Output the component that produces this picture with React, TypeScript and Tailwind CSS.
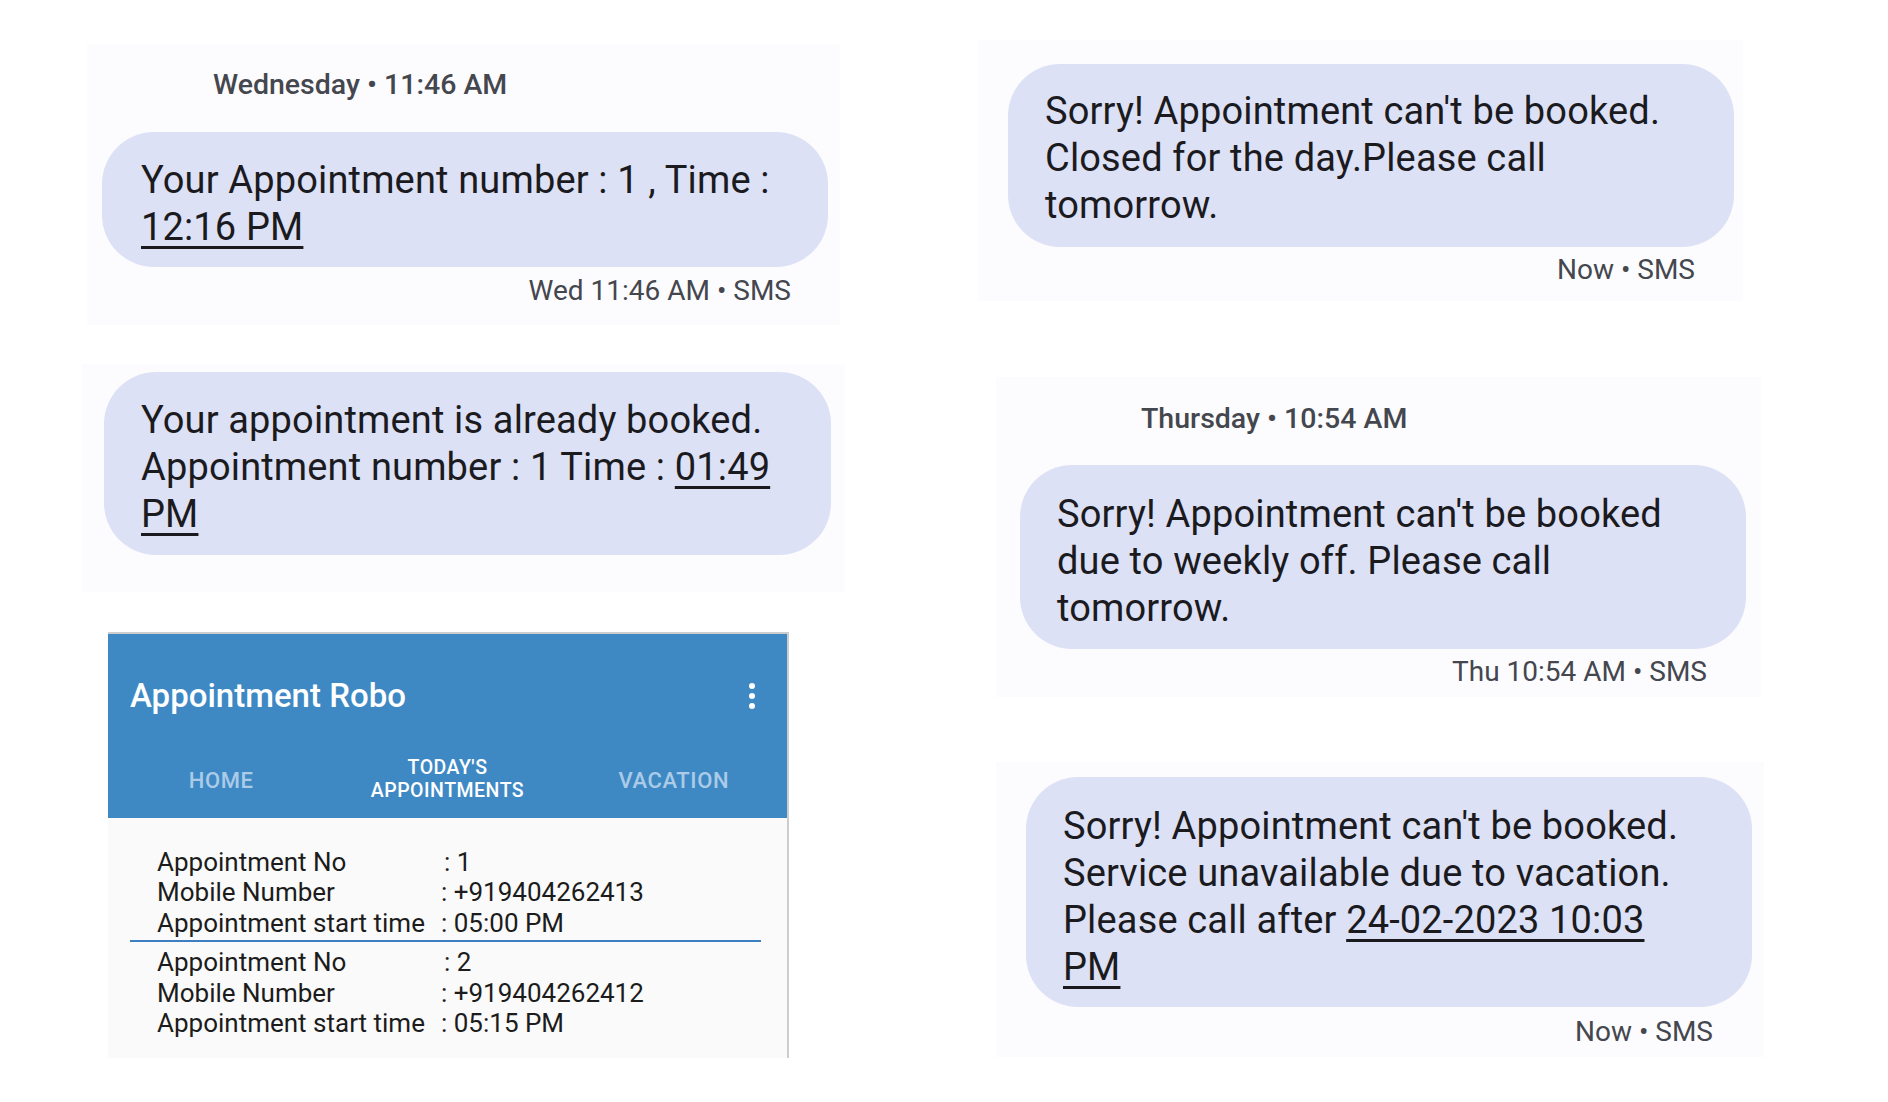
import type { ReactNode } from "react";

const font = { fontFamily: "Roboto, 'Noto Sans', sans-serif" };

function Link({ children }: { children: ReactNode }) {
  return <span className="underline decoration-[3px] underline-offset-[6px]">{children}</span>;
}

function Bubble({ className, lines }: { className: string; lines: ReactNode[] }) {
  return (
    <div className={`shrink-0 rounded-[52px] bg-[#dde1f5] pl-[37px] text-[38px] leading-[47px] tracking-[0.15px] text-[#1b1b1f] ${className}`}>
      {lines.map((l, i) => (
        <div key={i} className="whitespace-nowrap">
          {l}
        </div>
      ))}
    </div>
  );
}

function DayLabel({ text, className }: { text: string; className: string }) {
  return <div className={`h-[34px] text-[28.5px] font-medium leading-[34px] text-[#44474e] ${className}`}>{text}</div>;
}

function Meta({ text, className }: { text: string; className: string }) {
  return <div className={`h-[34px] text-right text-[28px] leading-[34px] text-[#44474e] ${className}`}>{text}</div>;
}

const appointments = [
  { no: "1", mobile: "+919404262413", time: "05:00 PM" },
  { no: "2", mobile: "+919404262412", time: "05:15 PM" },
];

function Row({ label, value, pad }: { label: string; value: string; pad?: boolean }) {
  return (
    <div className="flex h-[30.5px] items-center whitespace-nowrap">
      <span className="w-[284px]">{label}</span>
      <span className={pad ? "pl-[3px]" : ""}>{value}</span>
    </div>
  );
}

function AppScreen() {
  return (
    <div className="ml-[108px] mt-[40px] flex h-[426px] w-[681px] flex-col border-r-2 border-t-2 border-[#cdcdcd]">
      <div className="flex h-[184px] flex-col bg-[#3e89c4]">
        <div className="mt-[42px] flex h-[40px] items-center justify-between pl-[22px] pr-[32px]">
          <span className="text-[33px] font-medium text-white">Appointment Robo</span>
          <div className="flex flex-col gap-[4px]">
            <span className="h-[6px] w-[6px] rounded-full bg-white" />
            <span className="h-[6px] w-[6px] rounded-full bg-white" />
            <span className="h-[6px] w-[6px] rounded-full bg-white" />
          </div>
        </div>
        <div className="mt-[33px] grid h-[60px] grid-cols-3 items-center font-medium">
          <div className="pt-[3px] text-center text-[22px] tracking-[0.6px] text-[#abcbe7]">HOME</div>
          <div className="text-center text-[19.5px] leading-[23px] tracking-[0.5px] text-white">
            TODAY'S
            <br />
            APPOINTMENTS
          </div>
          <div className="pt-[3px] text-center text-[22px] tracking-[0.6px] text-[#abcbe7]">VACATION</div>
        </div>
      </div>
      <div className="flex-1 bg-[#fafafa] pt-[29px] text-[26px] text-[#1c1c1c]">
        {appointments.map((a, i) => (
          <div key={a.no}>
            {i > 0 && <div className="ml-[22px] mt-[1px] mb-[6px] h-[2px] w-[631px] bg-[#3d7fc0]" />}
            <div className="pl-[49px]">
              <Row label="Appointment No" value={`: ${a.no}`} pad />
              <Row label="Mobile Number" value={`: ${a.mobile}`} />
              <Row label="Appointment start time" value={`: ${a.time}`} />
            </div>
          </div>
        ))}
      </div>
    </div>
  );
}

export default function App() {
  return (
    <div className="flex h-[1102px] w-[1888px] overflow-hidden bg-white" style={font}>
      <div className="flex w-[978px] shrink-0 flex-col items-start">
        <div className="ml-[87px] mt-[44px] flex h-[281px] w-[753px] flex-col bg-[#fcfbfe]">
          <DayLabel text="Wednesday • 11:46 AM" className="mt-[24px] pl-[126px]" />
          <Bubble
            className="ml-[15px] mt-[30px] h-[135px] w-[726px] pl-[39px] pt-[25px]"
            lines={["Your Appointment number : 1 , Time :", <Link>12:16 PM</Link>]}
          />
          <Meta text="Wed 11:46 AM • SMS" className="mt-[7px] pr-[49px]" />
        </div>

        <div className="ml-[82px] mt-[39px] flex h-[228px] w-[763px] flex-col bg-[#fcfbfe]">
          <Bubble
            className="ml-[22px] mt-[8px] h-[183px] w-[727px] pt-[25px]"
            lines={[
              "Your appointment is already booked.",
              <>
                Appointment number : 1 Time : <Link>01:49</Link>
              </>,
              <Link>PM</Link>,
            ]}
          />
        </div>

        <AppScreen />
      </div>

      <div className="flex flex-col items-start">
        <div className="mt-[40px] flex h-[261px] w-[765px] flex-col bg-[#fcfbfe]">
          <Bubble
            className="ml-[30px] mt-[24px] h-[183px] w-[726px] pt-[24px]"
            lines={["Sorry! Appointment can't be booked.", "Closed for the day.Please call", "tomorrow."]}
          />
          <Meta text="Now • SMS" className="mt-[6px] pr-[48px]" />
        </div>

        <div className="ml-[18px] mt-[76px] flex h-[320px] w-[765px] flex-col bg-[#fcfbfe]">
          <DayLabel text="Thursday • 10:54 AM" className="mt-[25px] pl-[145px]" />
          <Bubble
            className="ml-[24px] mt-[29px] h-[184px] w-[726px] pt-[26px]"
            lines={["Sorry! Appointment can't be booked", "due to weekly off. Please call", "tomorrow."]}
          />
          <Meta text="Thu 10:54 AM • SMS" className="mt-[6px] pr-[54px]" />
        </div>

        <div className="ml-[18px] mt-[65px] flex h-[295px] w-[768px] flex-col bg-[#fcfbfe]">
          <Bubble
            className="ml-[30px] mt-[15px] h-[230px] w-[726px] pt-[26px]"
            lines={[
              "Sorry! Appointment can't be booked.",
              "Service unavailable due to vacation.",
              <>
                Please call after <Link>24-02-2023 10:03</Link>
              </>,
              <Link>PM</Link>,
            ]}
          />
          <Meta text="Now • SMS" className="mt-[8px] pr-[51px]" />
        </div>
      </div>
    </div>
  );
}
